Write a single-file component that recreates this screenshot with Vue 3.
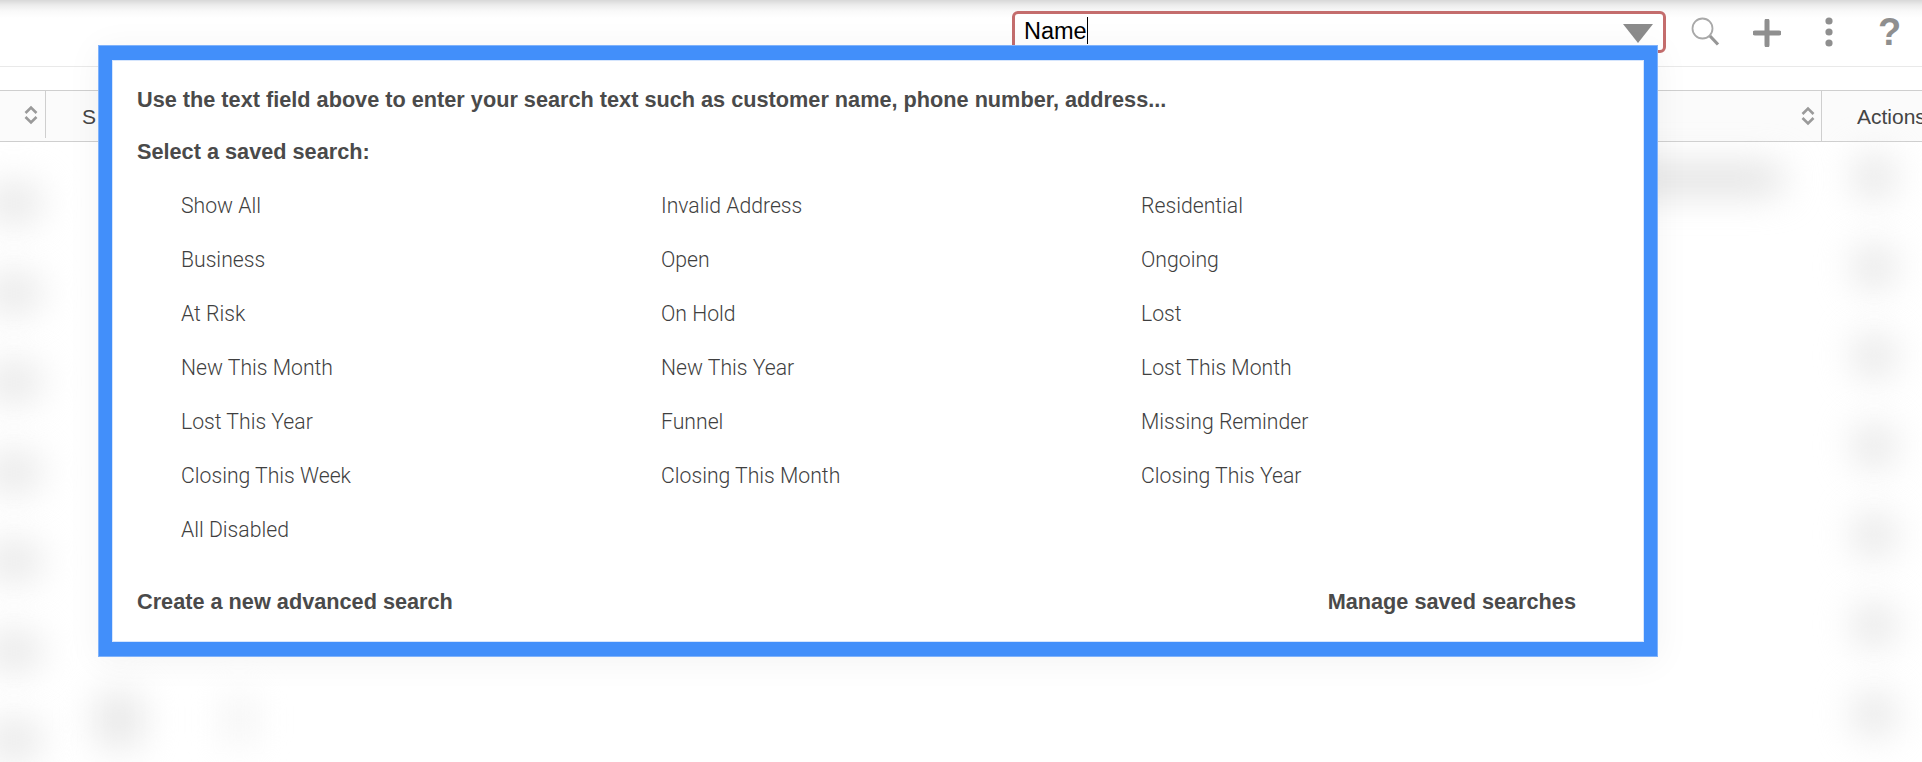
<script setup>
const columns = [
  ['Show All', 'Business', 'At Risk', 'New This Month', 'Lost This Year', 'Closing This Week', 'All Disabled'],
  ['Invalid Address', 'Open', 'On Hold', 'New This Year', 'Funnel', 'Closing This Month'],
  ['Residential', 'Ongoing', 'Lost', 'Lost This Month', 'Missing Reminder', 'Closing This Year']
]
const rowCount = [0, 1, 2, 3, 4, 5, 6]
</script>

<template>
  <div class="page">
    <header class="toolbar">
      <div class="search-box">
        <span class="search-text">Name</span><span class="caret"></span>
        <span class="arrow"></span>
      </div>
      <button class="tool tool-search" aria-label="Search">
        <svg width="29" height="30" viewBox="0 0 29 30" fill="none">
          <circle cx="11.5" cy="11.5" r="10" stroke="#a9a9a9" stroke-width="1.8" />
          <path d="M19 19l8 8.5" stroke="#969696" stroke-width="3.2" />
        </svg>
      </button>
      <button class="tool tool-plus" aria-label="Add">
        <svg width="28" height="28" viewBox="0 0 28 28" fill="none">
          <path d="M14 2v24M2 14h24" stroke="#8f8f8f" stroke-width="5" stroke-linecap="round" />
        </svg>
      </button>
      <button class="tool tool-more" aria-label="More">
        <svg width="8" height="30" viewBox="0 0 8 30" fill="#8f8f8f">
          <circle cx="4" cy="4" r="3.6" />
          <circle cx="4" cy="15" r="3.6" />
          <circle cx="4" cy="26" r="3.6" />
        </svg>
      </button>
      <span class="tool-help">?</span>
    </header>

    <div class="table-head">
      <div class="head-check">
        <svg class="sort" width="14" height="20" viewBox="0 0 14 20" fill="none">
          <path d="M1.5 8L7 2.5 12.5 8M1.5 12L7 17.5 12.5 12" stroke="#9a9a9a" stroke-width="2.6" />
        </svg>
      </div>
      <div class="head-main"><span>S</span></div>
      <div class="head-sort">
        <svg class="sort" width="14" height="20" viewBox="0 0 14 20" fill="none">
          <path d="M1.5 8L7 2.5 12.5 8M1.5 12L7 17.5 12.5 12" stroke="#9a9a9a" stroke-width="2.6" />
        </svg>
      </div>
      <div class="head-actions">Actions</div>
    </div>

    <div class="rows">
      <div v-for="r in rowCount" :key="r" class="row">
        <div class="cell-left"><span class="smudge smudge-left"></span></div>
        <div class="cell-middle">
          <template v-if="r === 6">
            <span class="smudge smudge-a"></span>
            <span class="smudge smudge-b"></span>
          </template>
        </div>
        <div class="cell-wide"><span v-if="r === 0" class="smudge smudge-wide"></span></div>
        <div class="cell-right"><span class="smudge smudge-right"></span></div>
      </div>
    </div>

    <section class="popup">
      <p class="strong intro">Use the text field above to enter your search text such as customer name, phone number, address...</p>
      <p class="strong label">Select a saved search:</p>
      <div class="saved">
        <ul v-for="(col, i) in columns" :key="i" class="saved-col">
          <li v-for="item in col" :key="item">{{ item }}</li>
        </ul>
      </div>
      <footer class="popup-foot">
        <span class="strong">Create a new advanced search</span>
        <span class="strong">Manage saved searches</span>
      </footer>
    </section>
  </div>
</template>

<style>
html, body { margin: 0; background: #fff; }
</style>

<style scoped>
.page {
  position: relative;
  width: 1922px;
  height: 762px;
  overflow: hidden;
  background: #fff;
  font-family: "Liberation Sans", Arial, sans-serif;
  color: #4a4a4a;
}
.toolbar {
  height: 67px;
  box-sizing: border-box;
  display: flex;
  align-items: flex-start;
  border-bottom: 1.5px solid #e9e9e9;
  background: linear-gradient(#d8d8d8 0, #ececec 5px, #f9f9f9 11px, #fff 18px);
}
.search-box {
  position: relative;
  margin: 11px 0 0 1012px;
  width: 654px;
  height: 42px;
  box-sizing: border-box;
  border: 3px solid #c46d6d;
  border-radius: 6px;
  background: #fff;
  display: flex;
  align-items: center;
  padding: 0 0 3px 9px;
}
.search-text { font-size: 23.5px; color: #000; line-height: 28px; }
.caret { width: 1.5px; height: 27px; background: #000; }
.arrow {
  position: absolute;
  right: 10px;
  top: 10px;
  width: 0;
  height: 0;
  border-left: 15.5px solid transparent;
  border-right: 15.5px solid transparent;
  border-top: 19px solid #8c8c8c;
}
.tool {
  border: 0;
  padding: 0;
  background: none;
  display: block;
}
.tool-search { margin: 17px 0 0 25px; width: 29px; }
.tool-plus { margin: 19px 0 0 33px; width: 28px; }
.tool-more { margin: 17px 0 0 44px; width: 8px; }
.tool-help {
  margin: 12px 0 0 45px;
  font-size: 38px;
  line-height: 40px;
  font-weight: 700;
  color: #8f8f8f;
}
.table-head {
  margin-top: 23px;
  height: 52px;
  box-sizing: border-box;
  display: flex;
  align-items: stretch;
  border-top: 1.5px solid #cfcfcf;
  border-bottom: 1.5px solid #cfcfcf;
  background: #fbfbfb;
  font-size: 21px;
  color: #444;
}
.head-check {
  width: 46px;
  box-sizing: border-box;
  height: 47px;
  border-right: 1.5px solid #cfcfcf;
  display: flex;
  align-items: center;
  padding-left: 24px;
}
.head-main {
  flex: 1;
  display: flex;
  align-items: center;
  padding: 2px 0 0 36px;
}
.head-sort {
  width: 35px;
  box-sizing: border-box;
  border-right: 1.5px solid #cfcfcf;
  display: flex;
  align-items: center;
  padding-left: 14px;
}
.head-actions {
  width: 100px;
  box-sizing: border-box;
  display: flex;
  align-items: center;
  padding: 2px 0 0 35px;
  white-space: nowrap;
}
.rows { display: flex; flex-direction: column; }
.row { height: 89.5px; display: flex; }
.cell-left { width: 60px; }
.cell-middle { width: 300px; display: flex; }
.cell-wide { flex: 1; display: flex; justify-content: flex-end; }
.cell-right { width: 100px; display: flex; justify-content: center; }
.smudge {
  display: block;
  background: #e2e2e2;
  border-radius: 14px;
  filter: blur(18px);
}
.smudge-left { width: 52px; height: 38px; margin: 42px 0 0 -12px; background: #e6e6e6; }
.smudge-right { width: 38px; height: 42px; margin: 14px 0 0 4px; background: #e4e4e4; }
.smudge-wide { width: 170px; height: 26px; margin: 24px 38px 0 0; background: #dcdcdc; }
.smudge-a { width: 46px; height: 54px; margin: 14px 0 0 36px; background: #e6e6e6; }
.smudge-b { width: 22px; height: 50px; margin: 16px 0 0 86px; background: #eeeeee; }
.popup {
  position: absolute;
  left: 98px;
  top: 45px;
  width: 1560px;
  height: 612px;
  box-sizing: border-box;
  padding: 28px 0 0 25px;
  background: #fff;
  border: 14px solid #428ffa;
  border-width: 15px 14px;
  outline: 1px solid #7fb2fb;
  outline-offset: -1px;
  box-shadow: inset 0 0 0 1px #d5e5fd, 0 4px 34px rgba(0, 0, 0, 0.05);
}
.strong {
  font-size: 21.7px;
  line-height: 24px;
  font-weight: 700;
  color: #4a4a4a;
}
p { margin: 0; }
.label { margin-top: 28px; }
.saved {
  margin-top: 15px;
  padding-left: 44px;
  display: grid;
  grid-template-columns: repeat(3, 480px);
}
.saved-col { margin: 0; padding: 0; list-style: none; }
.saved-col li {
  height: 54px;
  line-height: 54px;
  font-family: Roboto, "Liberation Sans", sans-serif;
  font-weight: 300;
  font-size: 21.2px;
  color: #3f3f3f;
}
.popup-foot {
  margin-top: 33px;
  padding-right: 68px;
  display: flex;
  justify-content: space-between;
}
</style>
